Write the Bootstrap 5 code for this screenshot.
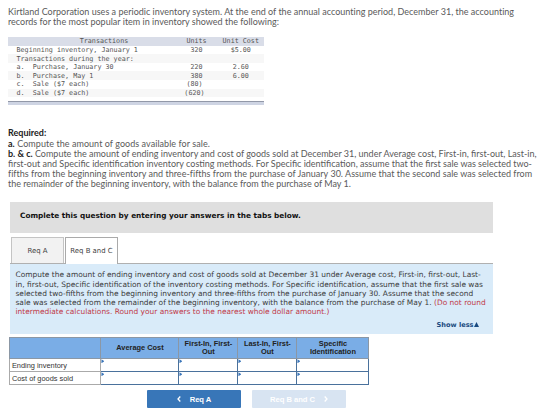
<!DOCTYPE html>
<html lang="en">
<head>
  <meta charset="UTF-8">
  <title>Periodic inventory</title>
  <link href="https://cdn.jsdelivr.net/npm/bootstrap@5.3.2/dist/css/bootstrap.min.css" rel="stylesheet">
  <style>
    body { width: 560px; height: 410px; overflow: hidden; background: #fff; }
    .prose { font: 9px/10.2px Lato, "Open Sans", sans-serif; color: #5a5a5a; padding: 6.5px 0 0 8px; white-space: nowrap; }
    .prose b { color: #222; }
    .intro { height: 37px; letter-spacing: .01px; }
    .required { height: 97px; padding-top: 23.4px; }
    .required .goods { letter-spacing: .055px; }
    .required .fifths { letter-spacing: .022px; }
    .required .rest { letter-spacing: -.013px; }
    .ledger { width: 255.5px; margin-left: 8px; font: 6.73px/8.6px "DejaVu Sans Mono", monospace; color: #555; }
    .ledger td, .ledger th { padding: .4px 0 0; height: 8.6px; line-height: 8.2px; font-weight: 400; text-align: center; white-space: pre; }
    .ledger th { background: #d9dde8; }
    .ledger td:first-child { text-align: left; padding-left: 8.5px; }
    .ledger tr:nth-child(even) td { background: #f7f7f7; }
    .ledger-end { width: 255.5px; height: 4px; margin: 3.8px 0 0 8px; background: #ced4e3; border-top: 1px solid #9298a8; }
    .work { width: 483px; margin: .4px 0 0 10px; font-family: "DejaVu Sans", sans-serif; }
    .banner { height: 31px; background: #dfdfdf; font-size: 7.34px; color: #111; padding: 0 0 4px 10px; }
    .req-tabs { height: 31px; padding: 4px 0 0 1px; border-bottom: 1px solid #b0b0b0; font-size: 6.95px; }
    .req-tabs button { width: 53px; height: 26px; border: 1px solid #c4c4c4; border-bottom: 0; background: #f2f2f2; padding: 1px 0 0; color: #444; }
    .req-tabs button.active { height: 27px; background: #fff; border-color: #aaa; margin-left: 1px; padding: 0; }
    .hint { height: 70px; background: #d9ebf9; color: #3a3a3a; font-size: 7.45px; line-height: 9.2px; padding: 6px 0 0 5.5px; white-space: nowrap; }
    .hint em { font-style: normal; color: #c03a48; }
    .show-less { font-size: 6.6px; color: #1a4a80; padding: 4.5px 14.5px 0 0; }
    .show-less svg { width: 5px; height: 5px; fill: #1a4a80; vertical-align: 0; }
    .answers { width: 359px; margin: 3px 0 0 -.6px; table-layout: fixed; font: 7.4px/9px "Liberation Sans", sans-serif; color: #333; border-collapse: collapse; }
    .answers th { height: 21px; background: #7aade6; border: 1px solid #8b97a5; padding: 0; text-align: center; color: #222; line-height: 8.5px; }
    .answers td { height: 13px; padding: 0 0 0 1.5px; border: 1px solid #aaa; white-space: nowrap; }
    .answers td.entry { border: 1px solid #4a719c; padding: 0; vertical-align: top; }
    .entry::before { content: ""; display: block; width: 3px; height: 4px; background: #3a75b9; clip-path: polygon(0 0, 100% 50%, 0 100%); }
    .steps { gap: 11px; padding: 5px 0 0 147px; }
    .step { width: 94px; height: 18px; border: 0; border-radius: 1px; background: #3876b8; color: #fff; font: bold 7.6px "Liberation Sans", sans-serif; padding: 0; gap: 9px; }
    .step.off { background: #d8e4f2; }
    .step svg { width: 4px; height: 6px; fill: none; stroke: #fff; stroke-width: 1.3; }
  </style>
</head>
<body>
  <div class="prose intro">
    <div>Kirtland Corporation uses a periodic inventory system. At the end of the annual accounting period, December 31, the accounting</div>
    <div>records for the most popular item in inventory showed the following:</div>
  </div>

  <table class="ledger">
    <colgroup><col style="width:167px"><col style="width:43px"><col></colgroup>
    <thead><tr><th style="padding-left:25px">Transactions</th><th>Units</th><th>Unit Cost</th></tr></thead>
    <tbody>
      <tr><td>Beginning inventory, January 1</td><td>320</td><td>$5.00</td></tr>
      <tr><td>Transactions during the year:</td><td></td><td></td></tr>
      <tr><td>a.  Purchase, January 30</td><td>220</td><td>2.60</td></tr>
      <tr><td>b.  Purchase, May 1</td><td>380</td><td>6.00</td></tr>
      <tr><td>c.  Sale ($7 each)</td><td>(80) </td><td></td></tr>
      <tr><td>d.  Sale ($7 each)</td><td>(620) </td><td></td></tr>
    </tbody>
  </table>
  <div class="ledger-end"></div>

  <div class="prose required">
    <div><b>Required:</b></div>
    <div class="goods"><b>a.</b> Compute the amount of goods available for sale.</div>
    <div><b>b. &amp; c.</b> Compute the amount of ending inventory and cost of goods sold at December 31, under Average cost, First-in, first-out, Last-in,</div>
    <div>first-out and Specific identification inventory costing methods. For Specific identification, assume that the first sale was selected two-</div>
    <div class="fifths">fifths from the beginning inventory and three-fifths from the purchase of January 30. Assume that the second sale was selected from</div>
    <div class="rest">the remainder of the beginning inventory, with the balance from the purchase of May 1.</div>
  </div>

  <div class="work">
    <div class="banner d-flex align-items-center fw-bold">Complete this question by entering your answers in the tabs below.</div>
    <div class="req-tabs d-flex">
      <button>Req A</button>
      <button class="active">Req B and C</button>
    </div>
    <div class="hint">
      <div>Compute the amount of ending inventory and cost of goods sold at December 31 under Average cost, First-in, first-out, Last-</div>
      <div>in, first-out, Specific identification of the inventory costing methods. For Specific identification, assume that the first sale was</div>
      <div>selected two-fifths from the beginning inventory and three-fifths from the purchase of January 30. Assume that the second</div>
      <div>sale was selected from the remainder of the beginning inventory, with the balance from the purchase of May 1. <em>(Do not round</em></div>
      <div><em>intermediate calculations. Round your answers to the nearest whole dollar amount.)</em></div>
      <div class="show-less text-end fw-bold">Show less<svg viewBox="0 0 5 5"><path d="M2.5 0 5 5H0z"/></svg></div>
    </div>
    <table class="answers">
      <colgroup><col style="width:91px"><col style="width:78px"><col style="width:59px"><col style="width:59px"><col style="width:72px"></colgroup>
      <thead><tr><th></th><th>Average Cost</th><th>First-In, First-<br>Out</th><th>Last-In, First-<br>Out</th><th>Specific<br>Identification</th></tr></thead>
      <tbody>
        <tr><td>Ending inventory</td><td class="entry"></td><td class="entry"></td><td class="entry"></td><td class="entry"></td></tr>
        <tr><td>Cost of goods sold</td><td class="entry"></td><td class="entry"></td><td class="entry"></td><td class="entry"></td></tr>
      </tbody>
    </table>
  </div>
  <div class="steps d-flex">
    <button class="step d-flex align-items-center justify-content-center"><svg viewBox="0 0 4 6"><path d="M3.3 .5 1 3l2.3 2.5"/></svg>Req A</button>
    <button class="step off d-flex align-items-center justify-content-center">Req B and C<svg viewBox="0 0 4 6"><path d="M.7 .5 3 3 .7 5.5"/></svg></button>
  </div>
  <script src="https://cdn.jsdelivr.net/npm/bootstrap@5.3.2/dist/js/bootstrap.bundle.min.js"></script>
</body>
</html>
